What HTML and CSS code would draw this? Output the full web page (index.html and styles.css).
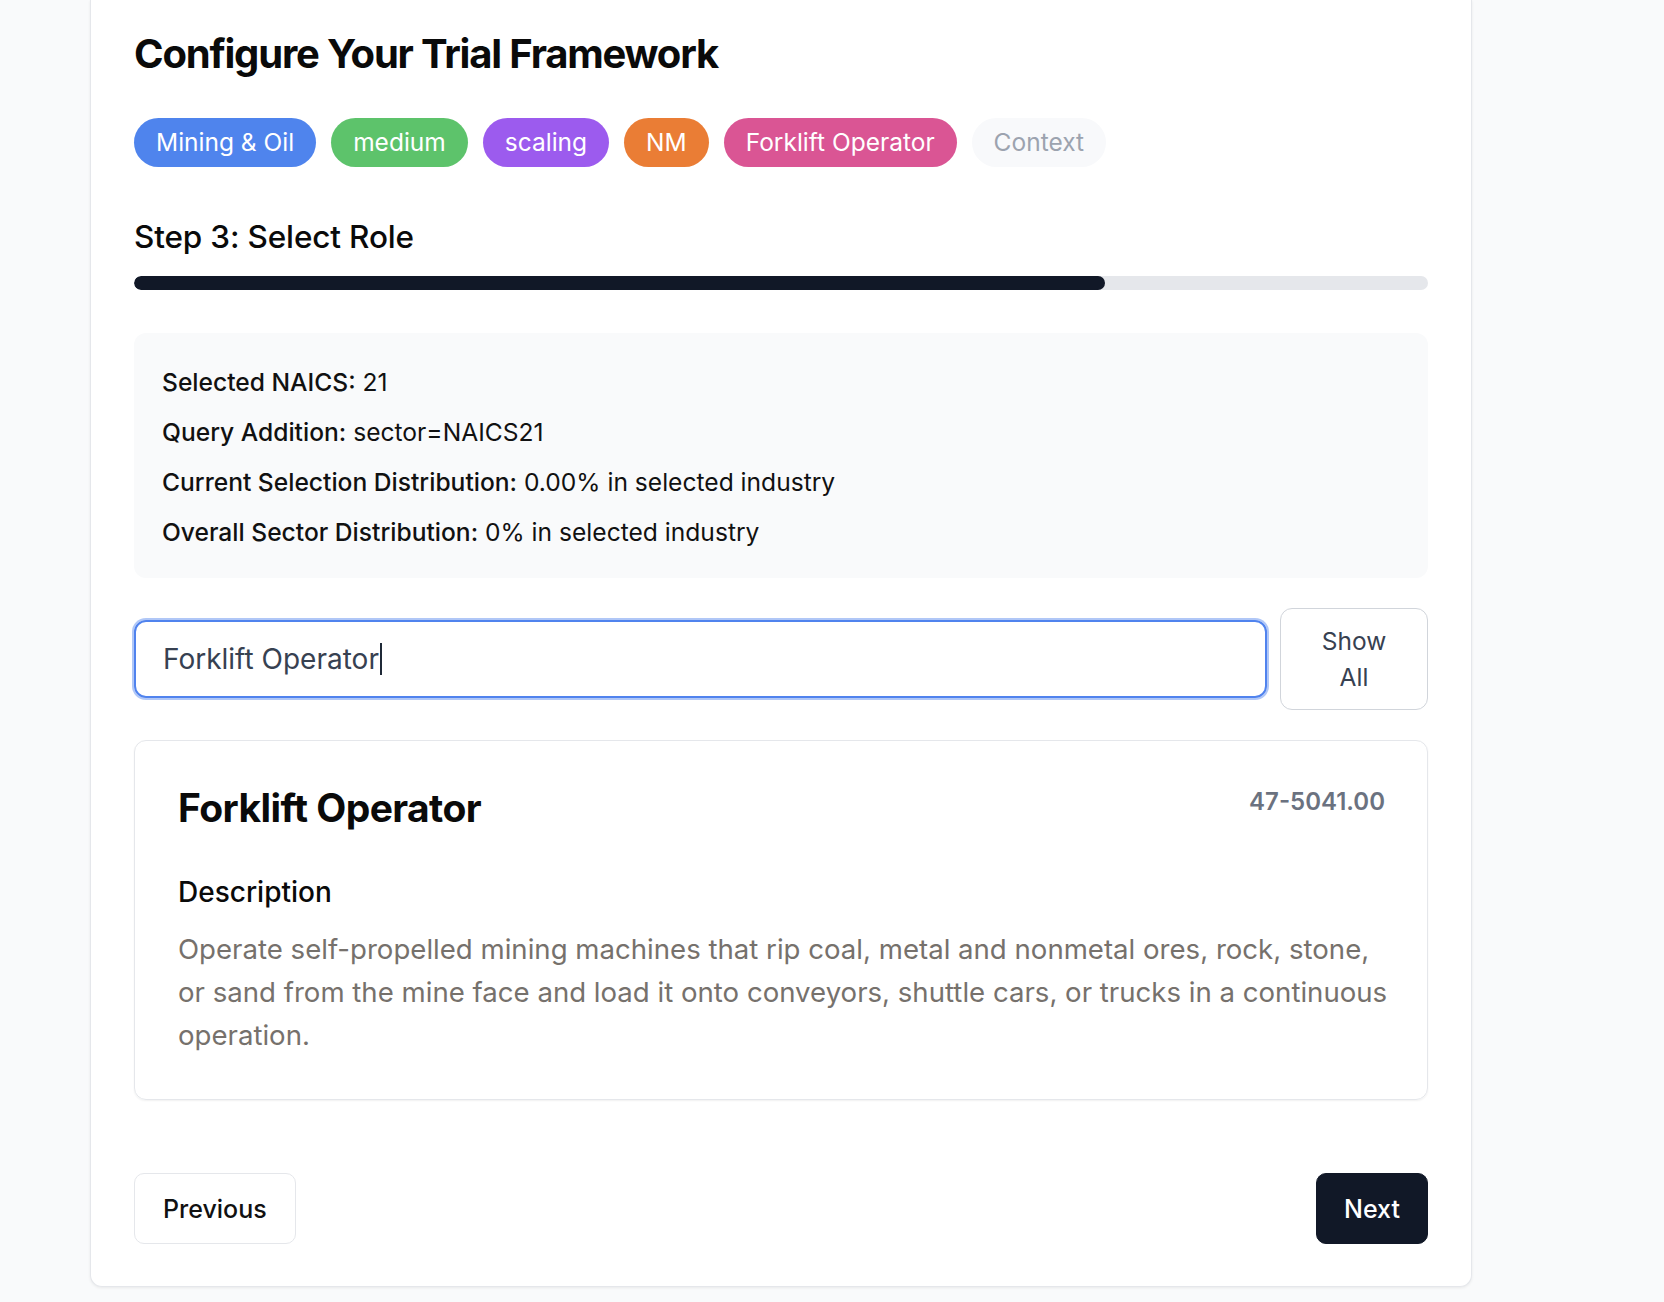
FILE: index.html
```html
<!DOCTYPE html>
<html lang="en">
<head>
<meta charset="utf-8">
<title>Configure Your Trial Framework</title>
<link rel="stylesheet" href="styles.css">
</head>
<body>
<div class="page">
  <main class="card">
    <h1 class="title">Configure Your Trial Framework</h1>
    <div class="pills">
      <span class="pill pill-blue">Mining &amp; Oil</span>
      <span class="pill pill-green">medium</span>
      <span class="pill pill-purple">scaling</span>
      <span class="pill pill-orange">NM</span>
      <span class="pill pill-pink">Forklift Operator</span>
      <span class="pill pill-muted">Context</span>
    </div>
    <h2 class="step">Step 3: Select Role</h2>
    <div class="progress"><div class="progress-fill" style="width:75%"></div></div>
    <section class="info">
      <p><strong>Selected NAICS:</strong> 21</p>
      <p><strong>Query Addition:</strong> sector=NAICS21</p>
      <p><strong>Current Selection Distribution:</strong> 0.00% in selected industry</p>
      <p><strong>Overall Sector Distribution:</strong> 0% in selected industry</p>
    </section>
    <div class="search-row">
      <div class="search-input" role="textbox" aria-label="Search roles"><span class="search-text">Forklift Operator</span><span class="caret"></span></div>
      <button class="show-all" type="button">Show All</button>
    </div>
    <article class="role">
      <div class="role-head">
        <h3 class="role-title">Forklift Operator</h3>
        <span class="role-code">47-5041.00</span>
      </div>
      <h4 class="role-sub">Description</h4>
      <p class="role-desc">Operate self-propelled mining machines that rip coal, metal and nonmetal ores, rock, stone, or sand from the mine face and load it onto conveyors, shuttle cars, or trucks in a continuous operation.</p>
    </article>
    <div class="nav">
      <button class="btn btn-outline" type="button">Previous</button>
      <button class="btn btn-dark" type="button">Next</button>
    </div>
  </main>
</div>
</body>
</html>
```
FILE: styles.css
```css
* { box-sizing: border-box; }
html, body { margin: 0; padding: 0; }
body {
  background: #f9fafb;
  font-family: Inter, "Noto Sans", sans-serif;
  color: #111827;
  height: 1302px;
  overflow: hidden;
}
.page {
  padding-left: 90px;
}
.card {
  width: 1382px;
  background: #ffffff;
  border: 1px solid #e5e7eb;
  border-top: none;
  border-radius: 0 0 12px 12px;
  box-shadow: 0 1px 3px rgba(0,0,0,0.07);
  padding: 30px 43px 42px 43px;
}
.title {
  margin: 0;
  font-size: 40px;
  line-height: 48px;
  font-weight: 700;
  letter-spacing: -0.03em;
  color: #0a0a0a;
}
.pills {
  display: flex;
  gap: 15px;
  margin-top: 40px;
}
.pill {
  display: inline-block;
  padding: 10px 22px;
  font-size: 24.5px;
  line-height: 29px;
  border-radius: 999px;
  color: #ffffff;
}
.pill-blue { background: #4f84ed; }
.pill-green { background: #5dc36b; }
.pill-purple { background: #9c5bee; }
.pill-orange { background: #ea7d35; }
.pill-pink { background: #da5594; }
.pill-muted { background: #f8f9fb; color: #9ca3af; }
.step {
  margin: 52px 0 0 0;
  font-size: 31.5px;
  line-height: 36px;
  font-weight: 500;
  letter-spacing: -0.005em;
  color: #0a0a0a;
}
.progress {
  margin-top: 21px;
  height: 14px;
  background: #e5e7eb;
  border-radius: 999px;
  overflow: hidden;
}
.progress-fill {
  height: 100%;
  background: #111827;
  border-radius: 999px;
}
.info {
  margin-top: 43px;
  background: #f9fafb;
  border-radius: 12px;
  padding: 34px 28px 31px 28px;
  display: flex;
  flex-direction: column;
  gap: 20px;
}
.info p {
  margin: 0;
  font-size: 24.6px;
  line-height: 30px;
  color: #111111;
}
.info strong { font-weight: 500; }
.search-row {
  margin-top: 30px;
  display: flex;
  align-items: center;
  gap: 13px;
}
.search-input {
  flex: 1;
  height: 78px;
  border: 2px solid #5083ee;
  box-shadow: 0 0 0 2px rgba(80,131,238,0.45);
  border-radius: 12px;
  padding: 0 27px;
  display: flex;
  align-items: center;
  font-size: 28px;
  color: #374151;
}
.caret {
  display: inline-block;
  width: 2px;
  height: 32px;
  background: #1f2937;
  margin-left: 1px;
}
.show-all {
  flex: 0 0 148px;
  height: 102px;
  background: #ffffff;
  border: 1px solid #d1d5db;
  border-radius: 12px;
  padding: 0 40px;
  font-family: Inter, "Noto Sans", sans-serif;
  font-size: 24.5px;
  line-height: 36px;
  color: #374151;
  text-align: center;
}
.role {
  margin-top: 30px;
  border: 1px solid #e5e7eb;
  border-radius: 12px;
  box-shadow: 0 1px 2px rgba(0,0,0,0.06);
  padding: 45px 42px 42px 43px;
}
.role-head {
  display: flex;
  justify-content: space-between;
  align-items: flex-start;
}
.role-title {
  margin: 0;
  font-size: 39px;
  line-height: 44px;
  font-weight: 700;
  letter-spacing: -0.015em;
  color: #0a0a0a;
}
.role-code {
  font-size: 24px;
  line-height: 32px;
  font-weight: 600;
  color: #6b7280;
}
.role-sub {
  margin: 44px 0 0 0;
  font-size: 28px;
  line-height: 36px;
  font-weight: 500;
  color: #0a0a0a;
}
.role-desc {
  margin: 18px -6px 0 0;
  font-size: 27.6px;
  line-height: 43px;
  color: #76716c;
}
.nav {
  margin-top: 73px;
  display: flex;
  justify-content: space-between;
}
.btn {
  height: 71px;
  padding: 0 28px;
  border-radius: 10px;
  font-family: Inter, "Noto Sans", sans-serif;
  font-size: 25px;
  font-weight: 500;
  line-height: 30px;
}
.btn-outline {
  background: #ffffff;
  border: 1px solid #e5e7eb;
  color: #111111;
}
.btn-dark {
  padding: 0 27px;
  background: #111827;
  border: 1px solid #111827;
  color: #ffffff;
}
```
